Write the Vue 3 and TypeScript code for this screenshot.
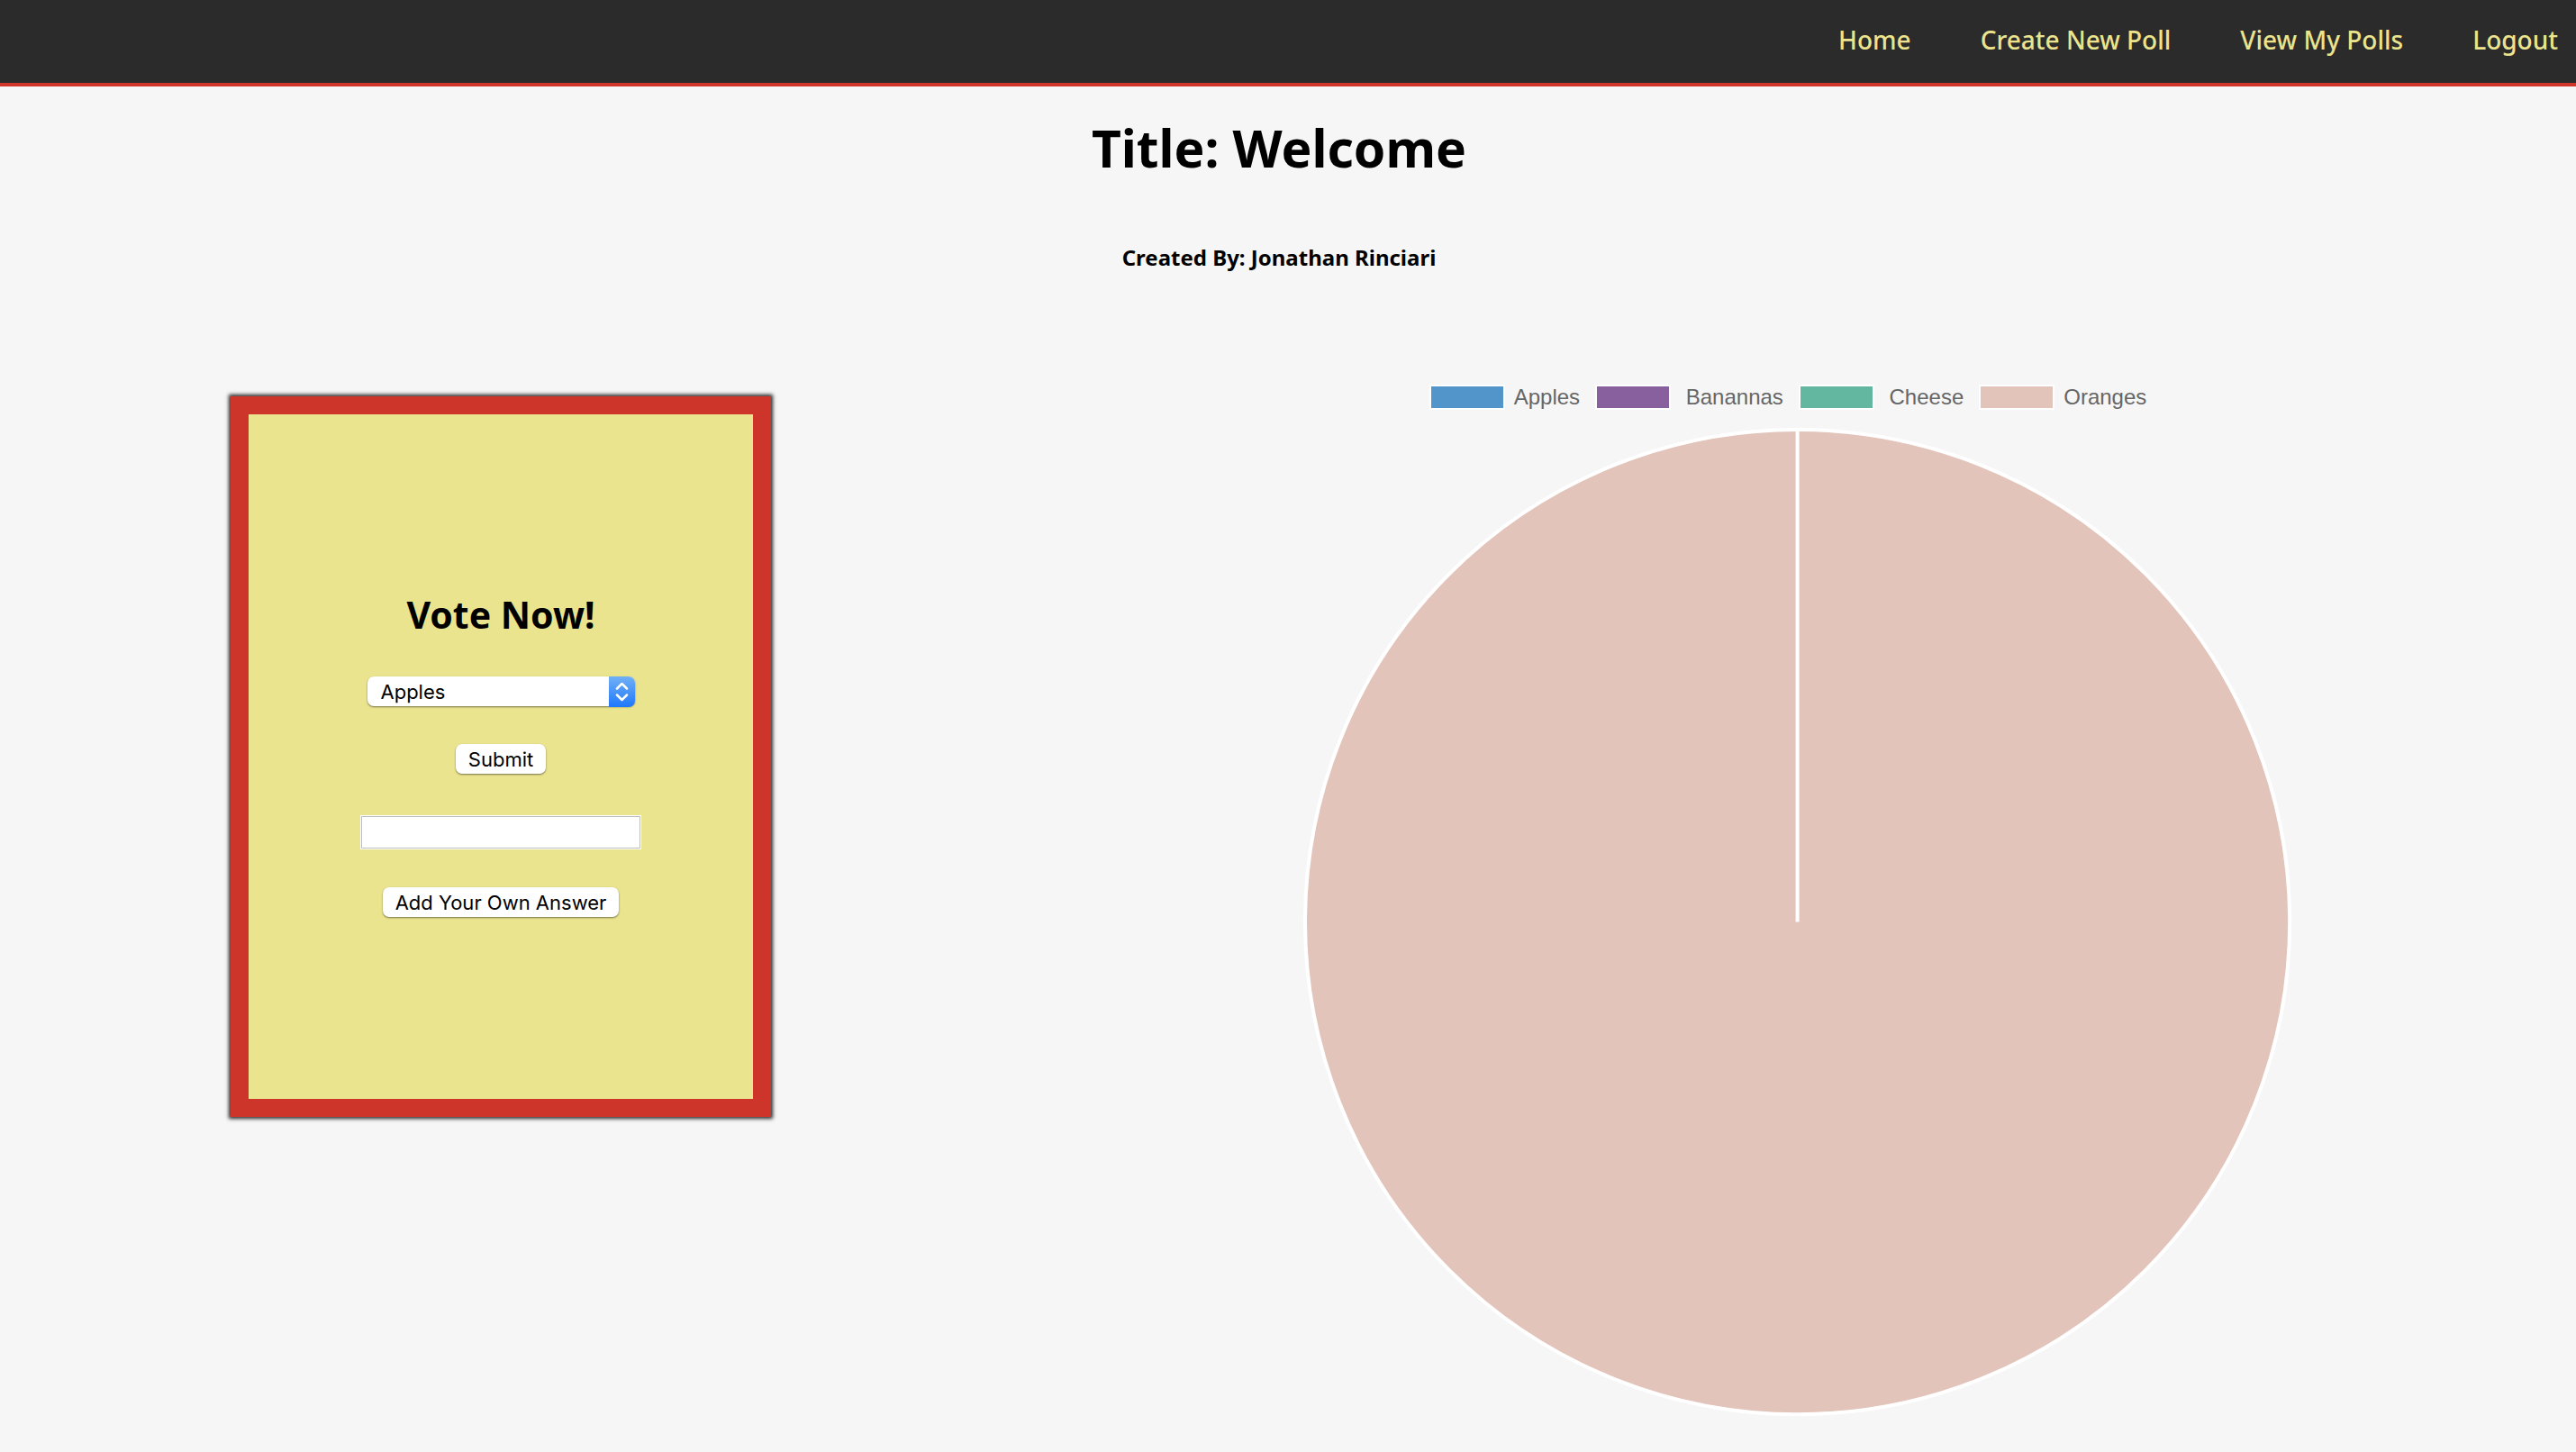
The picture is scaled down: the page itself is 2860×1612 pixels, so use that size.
<script setup lang="ts">
import { ref } from 'vue'

interface Answer {
  name: string
  label: string
  color: string
  votes: number
}

const links: string[] = ['Home', 'Create New Poll', 'View My Polls', 'Logout']

const answers = ref<Answer[]>([
  { name: 'Apples', label: 'Apples', color: '#5295ca', votes: 0 },
  { name: 'Banannas', label: ' Banannas', color: '#89609e', votes: 0 },
  { name: 'Cheese', label: ' Cheese', color: '#63b7a0', votes: 0 },
  { name: 'Oranges', label: 'Oranges', color: '#e2c4ba', votes: 1 },
])

const choice = ref<string>('Apples')
const ownAnswer = ref<string>('')
</script>

<template>
  <div class="page">
    <nav class="nav">
      <a v-for="link in links" :key="link" href="#">{{ link }}</a>
    </nav>

    <main class="content">
      <h1>Title: Welcome</h1>
      <h5>Created By: Jonathan Rinciari</h5>

      <div class="poll">
        <section class="card">
          <h2>Vote Now!</h2>
          <form class="form" @submit.prevent>
            <div class="picker">
              <select v-model="choice" aria-label="Answer">
                <option v-for="a in answers" :key="a.name" :value="a.name">{{ a.name }}</option>
              </select>
              <span class="stepper">
                <svg viewBox="0 0 58 68" aria-hidden="true">
                  <path d="M18 27 L29 16 L40 27 M18 41 L29 52 L40 41" />
                </svg>
              </span>
            </div>
            <button type="submit">Submit</button>
          </form>
          <form class="form" @submit.prevent>
            <input v-model="ownAnswer" class="own" type="text" aria-label="Your own answer" />
            <button type="submit">Add Your Own Answer</button>
          </form>
        </section>

        <section class="chart">
          <ul class="legend">
            <li v-for="a in answers" :key="a.name">
              <span class="swatch" :style="{ background: a.color }"></span>
              <span class="name">{{ a.label }}</span>
            </li>
          </ul>
          <svg class="pie" viewBox="0 0 1096 1096" role="img" aria-label="Votes">
            <circle cx="548" cy="548" r="546" />
            <path d="M548 548 V2" />
          </svg>
        </section>
      </div>
    </main>
  </div>
</template>

<style>
body {
  margin: 0;
  background: #f6f6f6;
}
</style>

<style scoped>
.page {
  color: #000;
  font-family: "Noto Sans", sans-serif;
}

.nav {
  display: flex;
  justify-content: flex-end;
  gap: 77px;
  padding: 24px 20px 28px;
  border-bottom: 4px solid #d03529;
  background: #2b2b2b;
}

.nav a {
  color: #ebe38d;
  font-size: 28px;
  font-weight: 500;
  line-height: 40px;
  text-decoration: none;
}

.content {
  margin-right: 20px;
}

h1,
h2,
h5 {
  margin: 0;
  font-weight: 700;
  text-align: center;
}

h1 {
  padding-top: 28px;
  font-size: 57px;
  line-height: 80px;
}

h5 {
  padding-top: 64px;
  font-size: 24px;
  line-height: 36px;
}

.poll {
  display: grid;
  grid-template-columns: 139fr 211fr;
  gap: 40px;
  align-items: start;
  margin-top: 123px;
}

.card {
  display: flex;
  flex-direction: column;
  align-items: center;
  box-sizing: border-box;
  width: 600px;
  min-height: 800px;
  margin: 13px auto 0;
  padding: 192px 0 100px;
  border: 20px solid #ce352a;
  background: #eae48e;
  box-shadow: 0 0 4px 2px #2b2b2b;
}

h2 {
  margin-bottom: 39px;
  font-size: 41px;
  line-height: 60px;
}

.form {
  display: flex;
  flex-direction: column;
  align-items: center;
  gap: 42px;
  margin-bottom: 46px;
}

.picker {
  position: relative;
  width: 297px;
  height: 33px;
}

select,
button,
input {
  box-sizing: border-box;
  margin: 0;
  border: 0;
  background: #fff;
  color: #000;
  font-family: Inter, sans-serif;
  font-size: 22px;
}

select,
button {
  height: 33px;
  border-radius: 7px;
  box-shadow: 0 1px 2px rgba(0, 0, 0, 0.5);
  line-height: 32px;
}

select {
  display: block;
  width: 100%;
  padding: 0 44px 0 15px;
  appearance: none;
}

.stepper {
  position: absolute;
  top: 0;
  right: 0;
  width: 29px;
  height: 34px;
  border-radius: 0 7px 7px 0;
  background: linear-gradient(#70b0f6, #1f78fb);
  pointer-events: none;
}

.stepper svg {
  display: block;
  width: 100%;
  height: 100%;
  fill: none;
  stroke: #fff;
  stroke-width: 5;
  stroke-linecap: round;
  stroke-linejoin: round;
}

button {
  padding: 0 14px;
}

.own {
  width: 312px;
  height: 38px;
  padding: 2px 6px;
  border: 1px solid #fff;
  outline: 1px solid #bfbfbf;
  outline-offset: -2px;
}

.chart {
  display: flex;
  flex-direction: column;
  align-items: center;
}

.legend {
  display: flex;
  gap: 17px;
  margin: 0;
  padding: 0 22px 0 0;
  list-style: none;
}

.legend li {
  display: flex;
  align-items: center;
  gap: 10px;
  height: 28px;
}

.swatch {
  box-sizing: border-box;
  width: 84px;
  height: 28px;
  border: 2px solid #fff;
}

.name {
  color: #666;
  font-family: "Liberation Sans", sans-serif;
  font-size: 24px;
  line-height: 28px;
  white-space: pre;
}

.pie {
  display: block;
  width: 65%;
  margin-top: 20px;
  stroke: #fff;
  stroke-width: 4;
}

.pie circle {
  fill: #e2c4ba;
}
</style>
